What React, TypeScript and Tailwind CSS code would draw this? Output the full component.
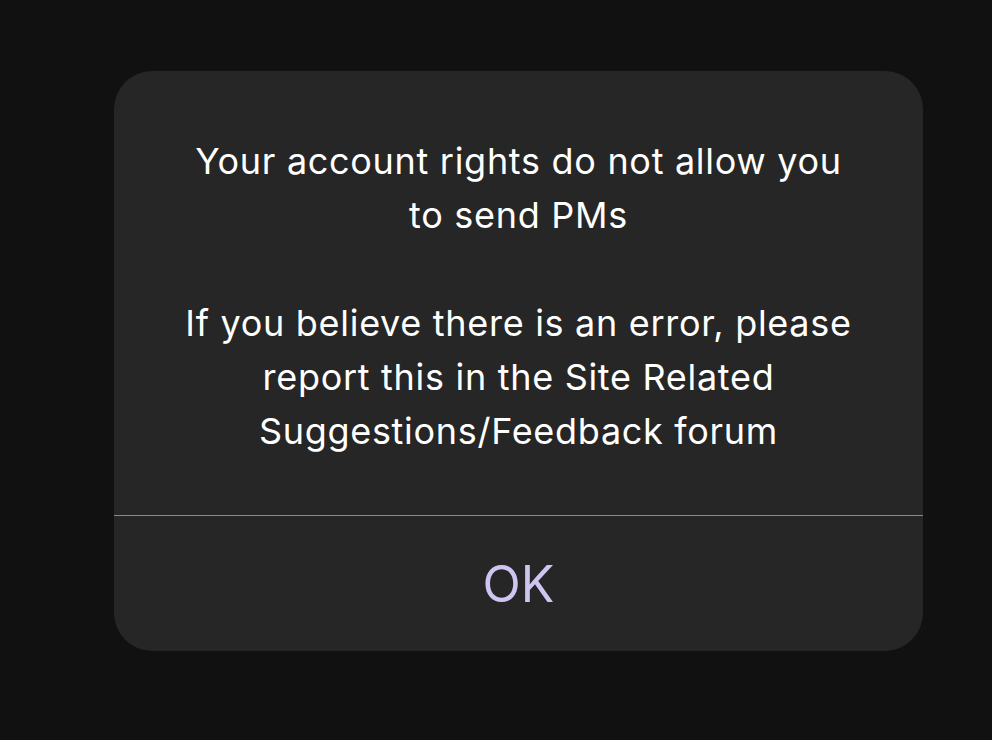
export default function App() {
  return (
    <div className="w-[992px] h-[740px] bg-[#111111] pt-[71px] pl-[114px] font-['Inter','Noto_Sans',sans-serif]">
      <div className="w-[809px] h-[580px] bg-[#262626] rounded-[38px] flex flex-col overflow-hidden">
        <div className="h-[444px] flex flex-col items-center justify-center text-white text-[36px] tracking-[0.7px] leading-[54px] text-center pt-[6px]">
          <p>Your account rights do not allow you</p>
          <p>to send PMs</p>
          <p>&nbsp;</p>
          <p>If you believe there is an error, please</p>
          <p>report this in the Site Related</p>
          <p>Suggestions/Feedback forum</p>
        </div>
        <div className="h-px bg-[#8a8a8a]" />
        <button className="flex-1 flex items-center justify-center text-[#d0c4f1] text-[50px] pt-[2px]">
          OK
        </button>
      </div>
    </div>
  );
}
